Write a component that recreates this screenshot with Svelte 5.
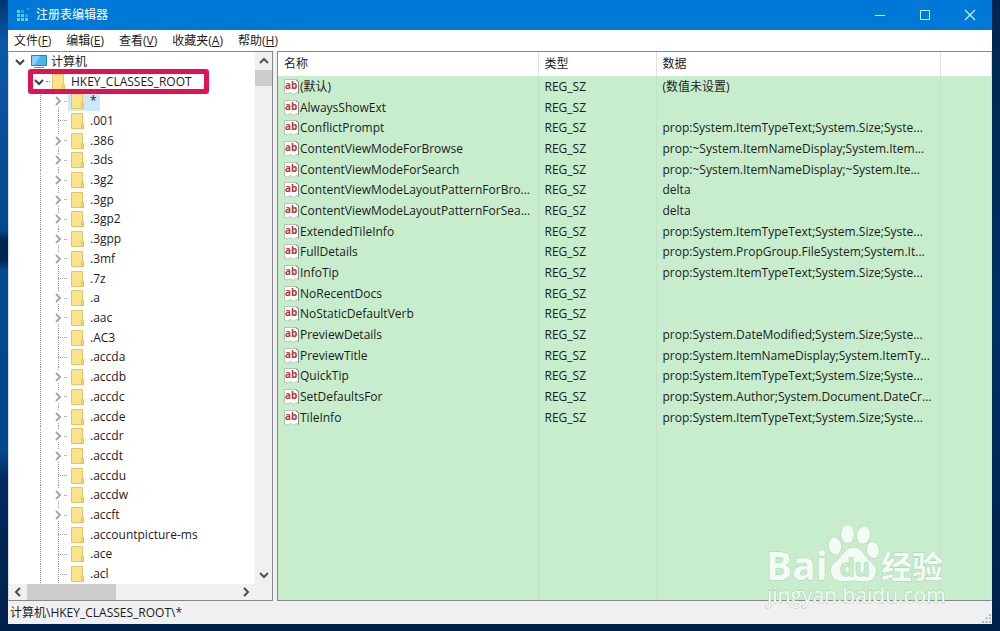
<script lang="ts">
	const menus = [
		{ label: '文件', key: 'F' },
		{ label: '编辑', key: 'E' },
		{ label: '查看', key: 'V' },
		{ label: '收藏夹', key: 'A' },
		{ label: '帮助', key: 'H' }
	];

	const leaves = ['.001', '.7z', '.AC3', '.accda', '.accdu', '.accountpicture-ms', '.ace', '.acl'];
	const keys = [
		'*', '.001', '.386', '.3ds', '.3g2', '.3gp', '.3gp2', '.3gpp', '.3mf', '.7z', '.a', '.aac', '.AC3',
		'.accda', '.accdb', '.accdc', '.accde', '.accdr', '.accdt', '.accdu', '.accdw', '.accft',
		'.accountpicture-ms', '.ace', '.acl'
	];

	const values = [
		['(默认)', '(数值未设置)'],
		['AlwaysShowExt', ''],
		['ConflictPrompt', 'prop:System.ItemTypeText;System.Size;Syste...'],
		['ContentViewModeForBrowse', 'prop:~System.ItemNameDisplay;System.Item...'],
		['ContentViewModeForSearch', 'prop:~System.ItemNameDisplay;~System.Ite...'],
		['ContentViewModeLayoutPatternForBro...', 'delta'],
		['ContentViewModeLayoutPatternForSea...', 'delta'],
		['ExtendedTileInfo', 'prop:System.ItemTypeText;System.Size;Syste...'],
		['FullDetails', 'prop:System.PropGroup.FileSystem;System.It...'],
		['InfoTip', 'prop:System.ItemTypeText;System.Size;Syste...'],
		['NoRecentDocs', ''],
		['NoStaticDefaultVerb', ''],
		['PreviewDetails', 'prop:System.DateModified;System.Size;Syste...'],
		['PreviewTitle', 'prop:System.ItemNameDisplay;System.ItemTy...'],
		['QuickTip', 'prop:System.ItemTypeText;System.Size;Syste...'],
		['SetDefaultsFor', 'prop:System.Author;System.Document.DateCr...'],
		['TileInfo', 'prop:System.ItemTypeText;System.Size;Syste...']
	];

	let selected = $state('*');
</script>

{#snippet chevron(d: string)}
	<svg width="10" height="10" viewBox="0 0 10 10" fill="none" stroke="currentColor" stroke-width="2">
		<path {d} />
	</svg>
{/snippet}

{#snippet folder()}
	<svg class="folder" width="14" height="16" viewBox="0 0 14 16">
		<path d="M.5.5h11v10l1 1v4H.5z" fill="#fbe38c" stroke="#e3c566" />
		<path d="M10.500 10.500h2v5h-2z" fill="#f3d36c" stroke="#dfbd58" stroke-width=".7" />
	</svg>
{/snippet}

<div class="desktop">
	<div class="window">
		<header class="titlebar">
			<svg width="14" height="14" viewBox="0 0 14 14" fill="#5fd0ee">
				<path d="M1 2h3v3H1zM1 6h3v3H1zM1 10h3v3H1zM5 6h3v3H5zM5 10h3v3H5zM9 10h3v3H9z" />
				<path d="M5 2h3v3H5zM9 6h3v3H9zM11 0h2v2h-2z" fill="#27a2e4" />
			</svg>
			<h1>注册表编辑器</h1>
			<button class="control" aria-label="最小化">
				<svg width="12" height="12" viewBox="0 0 12 12" stroke="currentColor"><path d="M1 6.500h10" /></svg>
			</button>
			<button class="control" aria-label="最大化">
				<svg width="12" height="12" viewBox="0 0 12 12" fill="none" stroke="currentColor"><path d="M1.500 1.500h9v9h-9z" /></svg>
			</button>
			<button class="control" aria-label="关闭">
				<svg width="12" height="12" viewBox="0 0 12 12" fill="none" stroke="currentColor" stroke-width="1.200"><path d="M1 1l10 10M11 1L1 11" /></svg>
			</button>
		</header>

		<nav class="menubar">
			{#each menus as menu}
				<button>{menu.label}(<u>{menu.key}</u>)</button>
			{/each}
		</nav>

		<main class="panes">
			<section class="tree-pane">
				<ul class="tree">
					<li class="root">
						<button class="expander open" aria-label="折叠">{@render chevron('M1 3l4 4 4-4')}</button>
						<svg class="computer" width="18" height="14" viewBox="0 0 18 14">
							<path d="M1.500.5h15v10h-15z" fill="#47b5ee" stroke="#2f7fb0" />
							<path d="M2 1h8L5 10H2z" fill="#83d2f8" />
							<path d="M4 12.500h10" stroke="#6b8ea3" />
						</svg>
						<span class="label">计算机</span>
					</li>
					<li class="hive">
						<button class="expander open" aria-label="折叠">{@render chevron('M1 3l4 4 4-4')}</button>
						<span class="stub"></span>
						{@render folder()}
						<span class="label">HKEY_CLASSES_ROOT</span>
						<span class="marker"></span>
					</li>
					{#each keys as key}
						<li class="key">
							<span class="branch">
								{#if !leaves.includes(key)}
									<button class="expander" aria-label="展开 {key}">{@render chevron('M3 1l4 4-4 4')}</button>
								{/if}
							</span>
							<button class="name" class:selected={selected === key} onclick={() => (selected = key)}>
								{@render folder()}
								<span>{key}</span>
							</button>
						</li>
					{/each}
				</ul>
				<div class="vscroll">
					<button aria-label="向上滚动">{@render chevron('M1 7l4-4 4 4')}</button>
					<span class="thumb"></span>
					<button aria-label="向下滚动">{@render chevron('M1 3l4 4 4-4')}</button>
				</div>
				<div class="hscroll">
					<button aria-label="向左滚动">{@render chevron('M7 1L3 5l4 4')}</button>
					<span class="thumb"></span>
					<button aria-label="向右滚动">{@render chevron('M3 1l4 4-4 4')}</button>
				</div>
			</section>

			<section class="list-pane">
				<table>
					<colgroup>
						<col class="col-name" />
						<col class="col-type" />
						<col class="col-data" />
						<col />
					</colgroup>
					<thead>
						<tr><th>名称</th><th>类型</th><th>数据</th><th></th></tr>
					</thead>
					<tbody>
						{#each values as [name, data]}
							<tr>
								<td>
									<span class="value">
										<svg width="15" height="16" viewBox="0 0 15 16">
											<path d="M.5.5h11l3 2v12l-2-1-3 2-3-2-3 1.500-3-1z" fill="#fff" stroke="#b4c4b8" />
											<path d="M11.500.5l3 2v12" fill="none" stroke="#7f8b84" />
											<text x="1" y="10">ab</text>
										</svg>
										{name}
									</span>
								</td>
								<td>REG_SZ</td>
								<td>{data}</td>
								<td></td>
							</tr>
						{/each}
						<tr class="filler"><td></td><td></td><td></td><td></td></tr>
					</tbody>
				</table>
			</section>
		</main>

		<footer class="statusbar">
			<span>计算机\HKEY_CLASSES_ROOT\{selected}</span>
			<svg width="10" height="10" viewBox="0 0 10 10" fill="#b5b5b5">
				<path d="M7 0h2v2H7zM7 3.500h2v2H7zM7 7h2v2H7zM3.500 3.500h2v2h-2zM3.500 7h2v2h-2zM0 7h2v2H0z" />
			</svg>
		</footer>
	</div>

	<svg class="watermark" width="182" height="86" viewBox="0 0 182 86">
		<ellipse cx="69" cy="24" rx="6.300" ry="8.800" transform="rotate(-8 69 24)" />
		<ellipse cx="81.500" cy="12" rx="6.500" ry="9.200" />
		<ellipse cx="97.500" cy="13" rx="6.500" ry="8.800" transform="rotate(10 97 13)" />
		<ellipse cx="107" cy="28" rx="6.200" ry="8.400" transform="rotate(-10 107 28)" />
		<path d="M88 25.500c-9 0-11 8-17 13-6 5-8 9-5 15 3 7 11 6 22 5 11 1 18 2 21-5 3-6 0-10-6-15-5-5-7-13-15-13z" />
		<text class="bai" x="0" y="58">Bai</text>
		<text class="du" x="74" y="54">du</text>
		<text class="exp" x="115" y="56">经验</text>
		<text class="site" x="1" y="81">jingyan.baidu.com</text>
	</svg>
</div>

<style>
	:global(body) {
		margin: 0;
	}

	.desktop {
		position: relative;
		box-sizing: border-box;
		height: 100vh;
		padding: 0 8px 7px;
		background:
			linear-gradient(#01346c, #0a58a8 40px, #01498f 230px, #002350 240px 260px, #014a90 270px, #01498c 450px, #012a5c 480px, #00204c) 0 0 / 8px 100% no-repeat,
			linear-gradient(#00264f, #013168 50%, #00204c);
		font: 12px/20px 'Open Sans', 'Noto Sans CJK SC', sans-serif;
		color: #1c1c1c;
	}

	.window {
		display: flex;
		flex-direction: column;
		height: 100%;
		background: #f0f0f0;
	}

	button {
		display: flex;
		align-items: center;
		justify-content: center;
		padding: 0;
		border: 0;
		background: none;
		font: inherit;
		color: inherit;
	}

	.titlebar {
		display: flex;
		align-items: center;
		height: 30px;
		padding-left: 8px;
		background: #0078d7;
		color: #fff;
	}

	h1 {
		flex: 1;
		margin: 0 0 0 6px;
		font-size: 12px;
		font-weight: 400;
	}

	.control {
		width: 45px;
		height: 30px;
		color: #c4f4ff;
	}

	.menubar {
		display: flex;
		gap: 15px;
		height: 21px;
		padding-left: 6px;
		background: #fff;
	}

	.menubar button {
		display: block;
	}

	.panes {
		display: flex;
		flex: 1;
		gap: 4px;
		min-height: 0;
	}

	.tree-pane {
		display: grid;
		grid-template: 1fr 16px / 1fr 17px;
		box-sizing: border-box;
		width: 265px;
		border: 1px solid #828790;
		border-left-color: #d5dbe2;
		background: #f0f0f0;
	}

	.tree {
		display: grid;
		grid-auto-rows: 1fr;
		min-height: 0;
		margin: 0;
		padding: 0;
		background: #fff;
		list-style: none;
	}

	li {
		position: relative;
		display: flex;
		align-items: center;
		min-height: 0;
		white-space: nowrap;
	}

	.root {
		padding-left: 6px;
	}

	.computer {
		margin-left: 5px;
	}

	.root .label {
		margin-left: 3px;
	}

	.hive {
		padding-left: 25px;
	}

	.hive .label {
		margin-left: 5px;
	}

	.stub {
		width: 4px;
		margin: 0 2px;
		border-top: 1px dotted #888;
	}

	.marker {
		position: absolute;
		top: -3px;
		left: 19px;
		width: 171px;
		height: 15px;
		border: 5px solid #dc1355;
		border-radius: 3px;
		pointer-events: none;
		z-index: 1;
	}

	.key {
		padding-left: 31px;
		background: repeating-linear-gradient(#999 0 1px, transparent 1px 2px) 31px 0 / 1px 100% no-repeat;
	}

	.branch {
		display: flex;
		align-items: center;
		align-self: stretch;
		width: 28px;
		padding-left: 12px;
		box-sizing: border-box;
		background:
			repeating-linear-gradient(#999 0 1px, transparent 1px 2px) 18px 0 / 1px 100% no-repeat,
			repeating-linear-gradient(90deg, #999 0 1px, transparent 1px 2px) 18px 50% / 10px 1px no-repeat;
	}

	.expander {
		width: 12px;
		height: 12px;
		background: #fff;
		color: #a6a6a6;
	}

	.expander.open {
		width: 10px;
		color: #404040;
	}

	.name {
		align-self: stretch;
		gap: 5px;
		padding: 0 3px;
	}

	.name.selected {
		background: #cde8fb;
	}

	.vscroll,
	.hscroll {
		display: flex;
		color: #505050;
	}

	.vscroll {
		flex-direction: column;
	}

	.vscroll button {
		height: 18px;
	}

	.vscroll .thumb {
		height: 16px;
		margin-bottom: auto;
		background: #cdcdcd;
	}

	.hscroll button {
		width: 18px;
	}

	.hscroll .thumb {
		width: 89px;
		margin-right: auto;
		background: #cdcdcd;
	}

	.list-pane {
		flex: 1;
		min-width: 0;
		border: 1px solid #828790;
		border-right-color: #d5dbe2;
		background: #c7edcc;
	}

	table {
		width: 100%;
		height: 100%;
		table-layout: fixed;
		border-collapse: collapse;
	}

	.col-name {
		width: 260px;
	}

	.col-type {
		width: 118px;
	}

	.col-data {
		width: 284px;
	}

	th,
	td {
		height: 21px;
		padding: 0 0 0 6px;
		border-right: 1px solid #bfe2c8;
		line-height: 20px;
		text-align: left;
		white-space: nowrap;
	}

	th {
		height: 24px;
		border-color: #e2e2e2;
		background: #fff;
		font-weight: 400;
	}

	th:last-child,
	td:last-child {
		border-right: 0;
	}

	tr:nth-child(3n) td {
		height: 20px;
	}

	tr.filler td {
		height: auto;
	}

	.value {
		display: flex;
		align-items: center;
		gap: 1px;
	}

	.value text {
		fill: #b5382c;
		font: bold 10px 'Open Sans', sans-serif;
	}

	.statusbar {
		display: flex;
		justify-content: space-between;
		align-items: center;
		height: 23px;
		padding-left: 2px;
	}

	.statusbar svg {
		align-self: flex-end;
	}

	.watermark {
		position: absolute;
		right: 52px;
		bottom: 23px;
		overflow: visible;
		fill: #f3fcf4;
		stroke: #afceb4;
		stroke-width: 1px;
		paint-order: stroke;
		pointer-events: none;
	}

	.bai {
		font: bold 39px 'Open Sans', sans-serif;
	}

	.du {
		fill: #c7edcc;
		stroke: #a4c8aa;
		font: bold 23px 'Open Sans', sans-serif;
	}

	.exp {
		font: bold 31px 'Noto Sans CJK SC', sans-serif;
	}

	.site {
		font: 21px 'Open Sans', sans-serif;
	}
</style>
